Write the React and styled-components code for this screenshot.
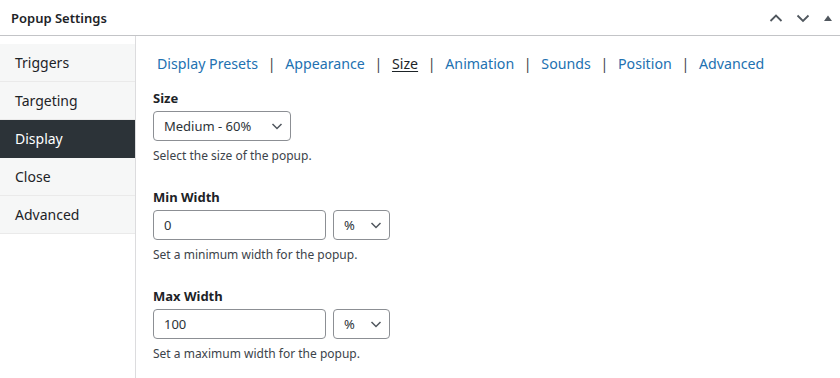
import React from 'react';
import styled, { createGlobalStyle } from 'styled-components';

const GlobalStyle = createGlobalStyle`
  html, body {
    margin: 0;
    padding: 0;
    background: #fff;
  }
  body {
    font-family: "Noto Sans", "Open Sans", sans-serif;
    color: #1d2327;
  }
  * {
    box-sizing: border-box;
  }
`;

const Box = styled.div`
  width: 840px;
  height: 378px;
  background: #fff;
  display: flex;
  flex-direction: column;
  overflow: hidden;
`;

const Header = styled.div`
  height: 36px;
  flex-shrink: 0;
  display: flex;
  align-items: center;
  justify-content: space-between;
  padding: 0 0 0 11px;
  border-bottom: 1px solid #c3c4c7;
`;

const Title = styled.h2`
  margin: 0;
  font-size: 13px;
  font-weight: 600;
  color: #1d2327;
`;

const Handles = styled.div`
  display: flex;
  align-items: center;
  height: 100%;
`;

const HandleButton = styled.button`
  width: ${(p) => p.$w || 27}px;
  height: 36px;
  border: 0;
  padding: 0;
  background: none;
  display: flex;
  align-items: center;
  justify-content: center;
  color: #50575e;
`;

const Body = styled.div`
  flex: 1;
  display: flex;
`;

const Sidebar = styled.ul`
  width: 136px;
  flex-shrink: 0;
  margin: 0;
  padding: 8px 0 0;
  list-style: none;
  border-right: 1px solid #dcdcde;
`;

const SideItem = styled.li`
  height: 38px;
  display: flex;
  align-items: center;
  padding: 0 15px;
  font-size: 14px;
  background: ${(p) => (p.$active ? '#2c3338' : '#f6f7f7')};
  color: ${(p) => (p.$active ? '#fff' : '#1d2327')};
  border-bottom: 1px solid ${(p) => (p.$active ? '#2c3338' : '#eaeaea')};
`;

const Content = styled.div`
  flex: 1;
  padding: 16px 0 0 17px;
`;

const Tabs = styled.nav`
  display: flex;
  align-items: center;
  padding-left: 4px;
  font-size: 14.2px;
  height: 22px;
`;

const Tab = styled.a`
  color: ${(p) => (p.$active ? '#1d2327' : '#2271b1')};
  text-decoration: ${(p) => (p.$active ? 'underline' : 'none')};
  text-underline-offset: 2px;
`;

const Sep = styled.span`
  color: #3c434a;
  margin: 0 9.7px;
`;

const Field = styled.div`
  margin-top: ${(p) => p.$top || 0}px;
`;

const Label = styled.div`
  font-size: 13px;
  font-weight: 700;
  color: #1d2327;
  line-height: 18px;
`;

const Row = styled.div`
  display: flex;
  gap: 7px;
  margin-top: 4px;
`;

const Control = styled.div`
  width: ${(p) => p.$w}px;
  height: 30px;
  border: 1px solid #8c8f94;
  border-radius: 4px;
  display: flex;
  align-items: center;
  justify-content: space-between;
  padding: 0 6px 0 10px;
  font-size: 13px;
  color: #2c3338;
  background: #fff;
`;

const Help = styled.p`
  margin: 7px 0 0;
  font-size: 12px;
  color: #3c434a;
  line-height: 16px;
`;

const Chevron = () => (
  <svg width="14" height="14" viewBox="0 0 14 14" fill="none">
    <path d="M2.5 5 L7 9.5 L11.5 5" stroke="#50575e" strokeWidth="1.5" />
  </svg>
);

const Arrow = ({ up }) => (
  <svg width="16" height="16" viewBox="0 0 16 16" fill="none">
    <path
      d={up ? 'M2.5 11 L8 5.5 L13.5 11' : 'M2.5 5.5 L8 11 L13.5 5.5'}
      stroke="#50575e"
      strokeWidth="1.8"
    />
  </svg>
);

const tabs = ['Display Presets', 'Appearance', 'Size', 'Animation', 'Sounds', 'Position', 'Advanced'];
const side = ['Triggers', 'Targeting', 'Display', 'Close', 'Advanced'];

export default function App() {
  return (
    <Box>
      <GlobalStyle />
      <Header>
        <Title>Popup Settings</Title>
        <Handles>
          <HandleButton>
            <Arrow up />
          </HandleButton>
          <HandleButton>
            <Arrow />
          </HandleButton>
          <HandleButton $w={24}>
            <svg width="10" height="8" viewBox="0 0 10 8">
              <path d="M1 7 L5 1.5 L9 7 Z" fill="#50575e" />
            </svg>
          </HandleButton>
        </Handles>
      </Header>
      <Body>
        <Sidebar>
          {side.map((s) => (
            <SideItem key={s} $active={s === 'Display'}>
              {s}
            </SideItem>
          ))}
        </Sidebar>
        <Content>
          <Tabs>
            {tabs.map((t, i) => (
              <React.Fragment key={t}>
                {i > 0 && <Sep>|</Sep>}
                <Tab $active={t === 'Size'}>{t}</Tab>
              </React.Fragment>
            ))}
          </Tabs>
          <Field $top={15}>
            <Label>Size</Label>
            <Row>
              <Control $w={138}>
                Medium - 60%
                <Chevron />
              </Control>
            </Row>
            <Help>Select the size of the popup.</Help>
          </Field>
          <Field $top={24}>
            <Label>Min Width</Label>
            <Row>
              <Control $w={173}>0</Control>
              <Control $w={57}>
                %
                <Chevron />
              </Control>
            </Row>
            <Help>Set a minimum width for the popup.</Help>
          </Field>
          <Field $top={24}>
            <Label>Max Width</Label>
            <Row>
              <Control $w={173}>100</Control>
              <Control $w={57}>
                %
                <Chevron />
              </Control>
            </Row>
            <Help>Set a maximum width for the popup.</Help>
          </Field>
        </Content>
      </Body>
    </Box>
  );
}
